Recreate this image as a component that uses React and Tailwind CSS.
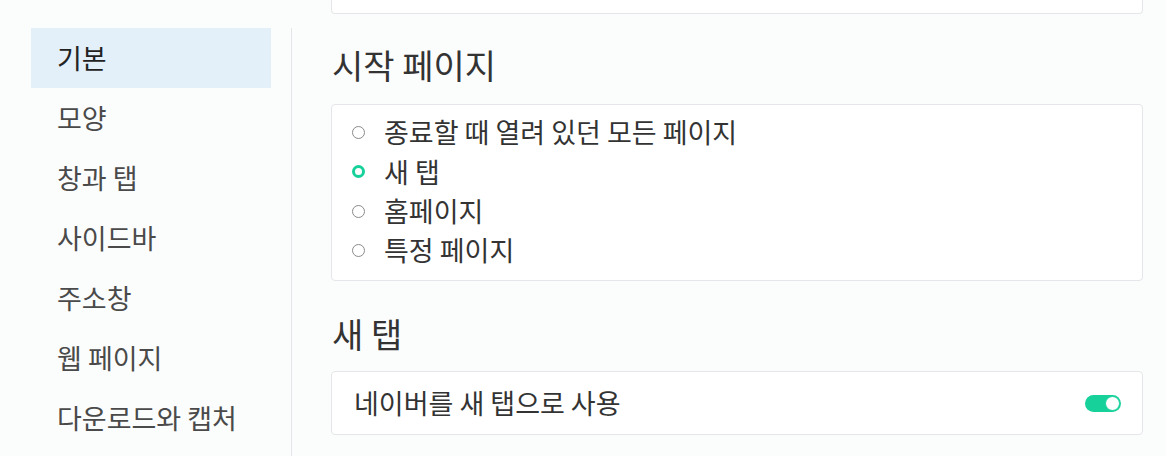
import React from 'react';

const font = { fontFamily: '"Noto Sans CJK KR", "Noto Sans", sans-serif' };

const navItems = ['기본', '모양', '창과 탭', '사이드바', '주소창', '웹 페이지', '다운로드와 캡처'];

const startOptions = [
  { label: '종료할 때 열려 있던 모든 페이지', checked: false },
  { label: '새 탭', checked: true },
  { label: '홈페이지', checked: false },
  { label: '특정 페이지', checked: false },
];

const Radio = ({ checked }) =>
  checked ? (
    <span className="w-[13px] h-[13px] rounded-full border-[3px] border-[#17d19b] bg-white shrink-0" />
  ) : (
    <span className="w-[13px] h-[13px] rounded-full border border-[#8a8a8a] bg-white shrink-0" />
  );

const App = () => {
  return (
    <div className="w-[1166px] h-[456px] overflow-hidden bg-[#fbfcfc] flex" style={font}>
      {/* Sidebar */}
      <div className="mt-[28px] ml-[31px] w-[261px] border-r border-[#e4e6e9] shrink-0">
        <nav className="w-[240px] flex flex-col">
          {navItems.map((item, i) => (
            <div
              key={item}
              className={
                i === 0
                  ? 'h-[60px] pl-[26px] flex items-center text-[27px] text-[#222] bg-[#e3eff9]'
                  : 'h-[60px] pl-[26px] flex items-center text-[27px] text-[#4a4a4a]'
              }
            >
              {item}
            </div>
          ))}
        </nav>
      </div>

      {/* Main content */}
      <div className="flex-1 pl-[39px] pr-[23px] flex flex-col">
        {/* previous card, scrolled off */}
        <div className="h-[14px] bg-white border-x border-b border-[#e4e6e9] rounded-b" />

        <h2 className="mt-[29px] mb-[17px] h-[44px] leading-[44px] text-[34px] text-[#333] pl-[1px]">시작 페이지</h2>

        <div className="bg-white border border-[#e4e6e9] rounded pt-[8px] pb-[10px] pl-[20px]">
          {startOptions.map((opt) => (
            <label key={opt.label} className="h-[39.25px] flex items-center gap-[19px] text-[27px] text-[#333]">
              <Radio checked={opt.checked} />
              <span>{opt.label}</span>
            </label>
          ))}
        </div>

        <h2 className="mt-[31px] mb-[15px] h-[44px] leading-[44px] text-[34px] text-[#333] pl-[1px]">새 탭</h2>

        <div className="h-[64px] bg-white border border-[#e4e6e9] rounded pl-[22px] pr-[21px] flex items-center justify-between">
          <span className="text-[27px] text-[#333]">네이버를 새 탭으로 사용</span>
          <span className="w-[36px] h-[17px] rounded-full bg-[#17d19b] flex items-center justify-end p-[1px]">
            <span className="w-[15px] h-[15px] rounded-full bg-white border border-[#17d19b]" />
          </span>
        </div>
      </div>
    </div>
  );
};

export default App;
